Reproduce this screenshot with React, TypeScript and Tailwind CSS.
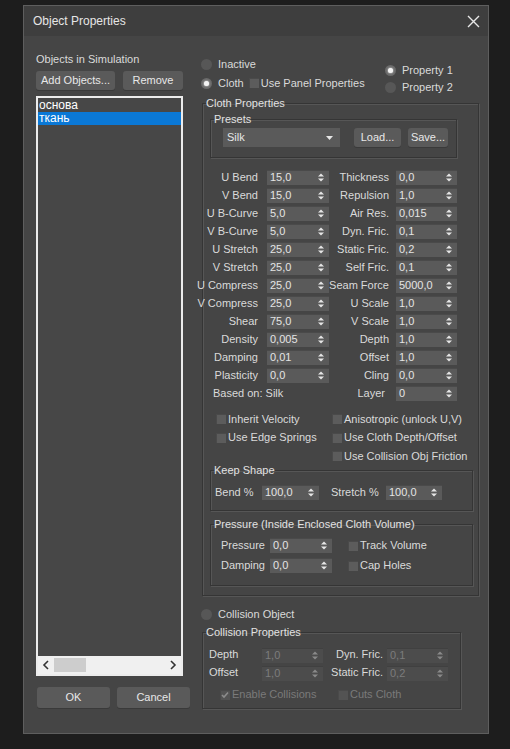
import type { ReactNode } from 'react'

function Arrows({ dim }: { dim?: boolean }) {
  const c = dim ? '#8a8a8a' : '#e6e6e6'
  return (
    <svg width="6" height="9" viewBox="0 0 6 9" className="shrink-0">
      <path d="M0 3.6 L3 0.4 L6 3.6 Z" fill={c} />
      <path d="M0 5.4 L6 5.4 L3 8.6 Z" fill={c} />
    </svg>
  )
}

function Spin({ value, className, dim }: { value: string; className: string; dim?: boolean }) {
  return (
    <div
      className={`flex h-[15px] shrink-0 items-center justify-between pl-[3px] pr-[5px] ${
        dim ? 'bg-[#4c4c4c] text-[#7c7c7c] shadow-[inset_0_1px_0_#404040]' : 'bg-[#5a5a5a] text-[#e4e4e4] shadow-[inset_0_1px_0_#4a4a4a]'
      } ${className}`}
    >
      <span className="leading-[15px]">{value}</span>
      <Arrows dim={dim} />
    </div>
  )
}

function Check({ label, checked, dim }: { label: string; checked?: boolean; dim?: boolean }) {
  return (
    <div className="flex items-center gap-[2px]">
      <div
        className={`flex h-[10px] w-[10px] shrink-0 items-center justify-center ${
          dim ? 'bg-[#535353]' : 'bg-[#5c5c5c]'
        } shadow-[inset_1px_1px_0_#4a4a4a]`}
      >
        {checked && (
          <svg width="8" height="8" viewBox="0 0 8 8">
            <path d="M1 4 L3 6 L7 1.5" stroke="#8c8c8c" strokeWidth="1.6" fill="none" />
          </svg>
        )}
      </div>
      <span className={dim ? 'text-[#7a7a7a]' : ''}>{label}</span>
    </div>
  )
}

function Radio({ label, on }: { label: string; on?: boolean }) {
  return (
    <div className="flex h-[14px] items-center gap-[6px]">
      <div
        className={`ml-[-1px] flex h-[11px] w-[11px] shrink-0 items-center justify-center rounded-full ${
          on ? 'bg-[#6a6a6a]' : 'bg-[#575757]'
        }`}
      >
        {on && <div className="h-[5px] w-[5px] rounded-full bg-[#f4f4f4] shadow-[0_0_2px_#fff]" />}
      </div>
      <span>{label}</span>
    </div>
  )
}

function Group({ title, className, children }: { title: string; className: string; children: ReactNode }) {
  return (
    <fieldset className={`border border-[#353535] shadow-[1px_1px_0_#565656,inset_1px_1px_0_#565656] ${className}`}>
      <legend className="ml-[3px] h-[13px] leading-[13px] text-[#e2e2e2]">{title}</legend>
      {children}
    </fieldset>
  )
}

function Btn({ children, className }: { children: ReactNode; className: string }) {
  return (
    <div
      className={`flex items-center justify-center rounded-[3px] bg-[#5a5a5a] text-[#e8e8e8] shadow-[0_1px_0_#3a3a3a] ${className}`}
    >
      {children}
    </div>
  )
}

const params: [string, string, string, string][] = [
  ['U Bend', '15,0', 'Thickness', '0,0'],
  ['V Bend', '15,0', 'Repulsion', '1,0'],
  ['U B-Curve', '5,0', 'Air Res.', '0,015'],
  ['V B-Curve', '5,0', 'Dyn. Fric.', '0,1'],
  ['U Stretch', '25,0', 'Static Fric.', '0,2'],
  ['V Stretch', '25,0', 'Self Fric.', '0,1'],
  ['U Compress', '25,0', 'Seam Force', '5000,0'],
  ['V Compress', '25,0', 'U Scale', '1,0'],
  ['Shear', '75,0', 'V Scale', '1,0'],
  ['Density', '0,005', 'Depth', '1,0'],
  ['Damping', '0,01', 'Offset', '1,0'],
  ['Plasticity', '0,0', 'Cling', '0,0'],
]

export default function App() {
  return (
    <div className="h-[749px] w-[510px] bg-[#1d1d1d] pl-[23px] pt-[5px] text-[11px] leading-[13px] text-[#dadada] [font-family:'Liberation_Sans',Arial,sans-serif]">
      <div className="flex h-[729px] w-[466px] flex-col border border-[#5e5e5e] bg-[#454545]">
        {/* title bar */}
        <div className="flex h-[30px] shrink-0 items-center justify-between bg-[#3e3e3e] pl-[9px] pr-[8px]">
          <span className="text-[12px] text-[#e6e6e6]">Object Properties</span>
          <svg width="13" height="13" viewBox="0 0 13 13">
            <path d="M1 1 L12 12 M12 1 L1 12" stroke="#e8e8e8" strokeWidth="1.4" />
          </svg>
        </div>

        <div className="flex flex-1">
          {/* left column */}
          <div className="ml-[12px] flex w-[154px] flex-col pt-[17px]">
            <div className="h-[13px]">Objects in Simulation</div>
            <div className="mt-[5px] flex gap-[8px]">
              <Btn className="h-[19px] w-[79px]">Add Objects...</Btn>
              <Btn className="h-[19px] w-[60px]">Remove</Btn>
            </div>
            <div className="mt-[6px] flex h-[580px] w-[147px] flex-col border-2 border-[#ececec] bg-[#474747]">
              <div className="flex-1 pt-[1px] text-[12px] leading-[13px] text-white">
                <div className="pl-[1px]">основа</div>
                <div className="bg-[#0a78d6] pl-[1px]">ткань</div>
              </div>
              <div className="flex h-[18px] items-center bg-[#f0f0f0] px-[4px]">
                <svg width="8" height="10" viewBox="0 0 8 10">
                  <path d="M6 1 L2 5 L6 9" stroke="#333" strokeWidth="1.6" fill="none" />
                </svg>
                <div className="ml-[4px] h-[14px] w-[32px] bg-[#cdcdcd]" />
                <div className="flex-1" />
                <svg width="8" height="10" viewBox="0 0 8 10">
                  <path d="M2 1 L6 5 L2 9" stroke="#333" strokeWidth="1.6" fill="none" />
                </svg>
              </div>
            </div>
            <div className="mt-[11px] flex gap-[7px] pl-[1px]">
              <Btn className="h-[21px] w-[73px]">OK</Btn>
              <Btn className="h-[21px] w-[73px]">Cancel</Btn>
            </div>
          </div>

          {/* right column */}
          <div className="ml-[12px] flex w-[277px] flex-col pt-[21px]">
            <div className="flex h-[33px]">
              <div className="flex w-[184px] flex-col gap-[5px]">
                <Radio label="Inactive" />
                <div className="flex items-center gap-[5px]">
                  <Radio label="Cloth" on />
                  <Check label="Use Panel Properties" />
                </div>
              </div>
              <div className="mt-[7px] flex flex-col gap-[4px]">
                <Radio label="Property 1" on />
                <Radio label="Property 2" />
              </div>
            </div>

            <Group title="Cloth Properties" className="mt-[7px] w-[277px] pb-[9px]">
              <Group title="Presets" className="ml-[7px] mt-[3px] w-[247px] pb-[10px] pt-[2px]">
                <div className="flex items-center pl-[12px]">
                  <div className="flex h-[19px] w-[117px] items-center justify-between bg-[#5a5a5a] pl-[4px] pr-[7px] text-[#e6e6e6]">
                    <span>Silk</span>
                    <svg width="7" height="4" viewBox="0 0 7 4">
                      <path d="M0 0 L7 0 L3.5 4 Z" fill="#e6e6e6" />
                    </svg>
                  </div>
                  <Btn className="ml-[14px] h-[19px] w-[47px]">Load...</Btn>
                  <Btn className="ml-[7px] h-[19px] w-[40px]">Save...</Btn>
                </div>
              </Group>

              <div className="mt-[10px] flex flex-col">
                {params.map(([l1, v1, l2, v2]) => (
                  <div key={l1} className="flex h-[18px] items-center">
                    <div className="flex w-[55px] justify-end whitespace-nowrap">{l1}</div>
                    <Spin value={v1} className="ml-[9px] w-[62px]" />
                    <div className="ml-[3px] flex w-[57px] justify-end whitespace-nowrap">{l2}</div>
                    <Spin value={v2} className="ml-[7px] w-[61px]" />
                  </div>
                ))}
                <div className="flex h-[18px] items-center">
                  <div className="w-[126px] pl-[10px]">Based on: Silk</div>
                  <div className="ml-[3px] flex w-[57px] justify-end pr-[4px]">Layer</div>
                  <Spin value="0" className="ml-[7px] w-[61px]" />
                </div>
              </div>

              <div className="mt-[8px] flex pl-[13px]">
                <div className="flex w-[116px] flex-col">
                  <div className="flex h-[18.5px] items-center"><Check label="Inherit Velocity" /></div>
                  <div className="flex h-[18.5px] items-center"><Check label="Use Edge Springs" /></div>
                </div>
                <div className="flex flex-col">
                  <div className="flex h-[18.5px] items-center"><Check label="Anisotropic (unlock U,V)" /></div>
                  <div className="flex h-[18.5px] items-center"><Check label="Use Cloth Depth/Offset" /></div>
                  <div className="flex h-[18.5px] items-center"><Check label="Use Collision Obj Friction" /></div>
                </div>
              </div>

              <Group title="Keep Shape" className="ml-[7px] mt-[-2px] w-[263px] pb-[10px] pt-[8px]">
                <div className="flex items-center pl-[4px]">
                  <div className="w-[47px]">Bend %</div>
                  <Spin value="100,0" className="w-[57px]" />
                  <div className="ml-[12px] w-[55px]">Stretch %</div>
                  <Spin value="100,0" className="w-[56px]" />
                </div>
              </Group>

              <Group title="Pressure (Inside Enclosed Cloth Volume)" className="ml-[7px] mt-[7px] w-[263px] pb-[9px] pt-[5px]">
                <div className="flex h-[20px] items-center">
                  <div className="flex w-[54px] justify-end">Pressure</div>
                  <Spin value="0,0" className="ml-[5px] w-[62px]" />
                  <div className="ml-[16px]"><Check label="Track Volume" /></div>
                </div>
                <div className="flex h-[20px] items-center">
                  <div className="flex w-[54px] justify-end">Damping</div>
                  <Spin value="0,0" className="ml-[5px] w-[62px]" />
                  <div className="ml-[16px]"><Check label="Cap Holes" /></div>
                </div>
              </Group>
            </Group>

            <div className="mt-[12px]">
              <Radio label="Collision Object" />
            </div>

            <Group title="Collision Properties" className="mt-[4px] w-[259px] pb-[6px] pt-[9px]">
              <div className="flex h-[18px] items-start pl-[6px]">
                <div className="w-[53px]">Depth</div>
                <Spin value="1,0" className="w-[61px]" dim />
                <div className="ml-[3px] flex w-[57px] justify-end whitespace-nowrap">Dyn. Fric.</div>
                <Spin value="0,1" className="ml-[4px] w-[61px]" dim />
              </div>
              <div className="flex h-[18px] items-start pl-[6px]">
                <div className="w-[53px]">Offset</div>
                <Spin value="1,0" className="w-[61px]" dim />
                <div className="ml-[3px] flex w-[57px] justify-end whitespace-nowrap">Static Fric.</div>
                <Spin value="0,2" className="ml-[4px] w-[61px]" dim />
              </div>
              <div className="mt-[4px] flex h-[14px] items-center pl-[17px]">
                <div className="w-[118px]"><Check label="Enable Collisions" checked dim /></div>
                <Check label="Cuts Cloth" dim />
              </div>
            </Group>
          </div>
        </div>
      </div>
    </div>
  )
}
